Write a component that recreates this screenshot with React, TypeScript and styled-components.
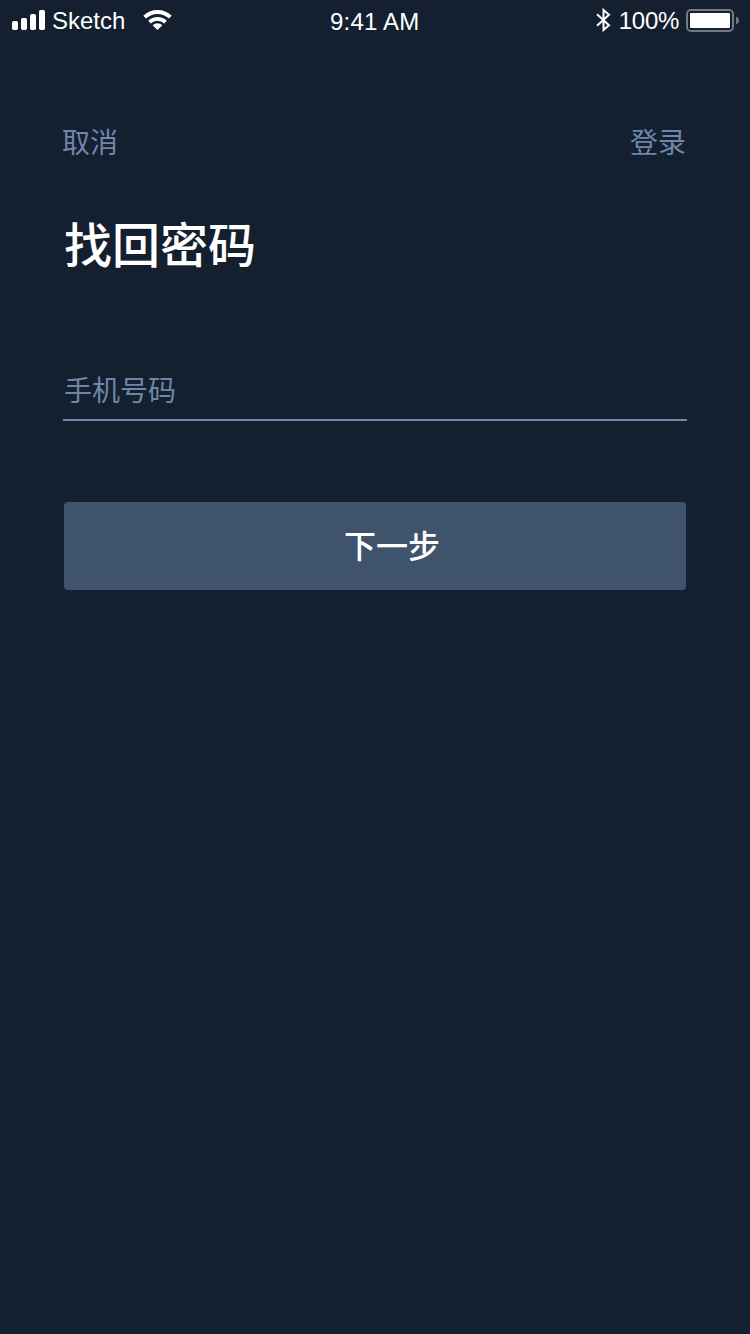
import React from "react";
import styled, { createGlobalStyle } from "styled-components";

const GlobalStyle = createGlobalStyle`
  html, body { margin: 0; background: #141f30; }
  * { box-sizing: border-box; }
`;

const Screen = styled.main`
  width: 750px;
  height: 1334px;
  background: #141f30;
  font-family: "Noto Sans CJK SC", sans-serif;
  overflow: hidden;
`;

const StatusBar = styled.header`
  display: grid;
  grid-template-columns: 1fr auto 1fr;
  height: 40px;
  padding: 0 11px 0 12px;
  color: #fff;
  font: 24px/40px "Liberation Sans", Arial, sans-serif;
`;

const StatusGroup = styled.div<{ $end?: boolean }>`
  display: flex;
  align-items: flex-start;
  justify-content: ${(p) => (p.$end ? "flex-end" : "flex-start")};

  svg { display: block; flex: none; }
`;

const StatusText = styled.span<{ $spacing?: number; $top?: number; $right?: number }>`
  letter-spacing: ${(p) => p.$spacing ?? 0}px;
  padding-top: ${(p) => p.$top ?? 1}px;
  padding-right: ${(p) => p.$right ?? 0}px;
  white-space: nowrap;
`;

const SignalIcon = styled.svg`margin: 10px 7px 0 0;`;
const WifiIcon = styled.svg`margin: 9px 0 0 17.5px;`;
const BluetoothIcon = styled.svg`margin: 8px 8px 0 0;`;
const BatteryIcon = styled.svg`margin: 9px 0 0 7px;`;

const Nav = styled.nav`
  display: flex;
  justify-content: space-between;
  margin-top: 81px;
  padding: 0 64px 0 62px;
`;

const NavLink = styled.button`
  padding: 0;
  border: 0;
  background: none;
  color: #6f85a9;
  font: 400 28px/40px "Noto Sans CJK SC", sans-serif;
`;

const Title = styled.h1`
  margin: 46px 0 0 64px;
  color: #fff;
  font-size: 48px;
  font-weight: 500;
  line-height: 70px;
`;

const Form = styled.form`
  padding: 93px 63px 0;
`;

const PhoneInput = styled.input`
  display: block;
  width: 100%;
  height: 51px;
  padding: 0 1px 11px;
  border: 0;
  border-bottom: 2px solid #6f85a9;
  border-radius: 0;
  outline: 0;
  background: none;
  color: #fff;
  font: 400 28px/38px "Noto Sans CJK SC", sans-serif;

  &::placeholder { color: #6f85a9; opacity: 1; }
`;

const NextButton = styled.button`
  display: block;
  width: 622px;
  height: 88px;
  margin: 81px 1px 0;
  padding: 0 0 4px 34px;
  border: 0;
  border-radius: 4px;
  background: #40536d;
  color: #fff;
  font: 500 32px/84px "Noto Sans CJK SC", sans-serif;
`;

export default function App() {
  return (
    <Screen>
      <GlobalStyle />
      <StatusBar>
        <StatusGroup>
          <SignalIcon width="33" height="20" viewBox="0 0 33 20" fill="#fff">
            <rect x="0" y="11" width="6" height="9" rx="1.7" />
            <rect x="9" y="8" width="6" height="12" rx="1.7" />
            <rect x="18" y="4" width="6" height="16" rx="1.7" />
            <rect x="27" y="0" width="6" height="20" rx="1.7" />
          </SignalIcon>
          <StatusText>Sketch</StatusText>
          <WifiIcon width="29" height="22" viewBox="0 0 30 22" fill="none" stroke="#fff">
            <path d="M1.7 8.1a19 19 0 0 1 26.6 0" strokeWidth="4" />
            <path d="M6.7 13.2a12 12 0 0 1 16.6 0" strokeWidth="3.8" />
            <path d="M15 21.4l-5-5a7.2 7.2 0 0 1 10 0z" fill="#fff" stroke="none" />
          </WifiIcon>
        </StatusGroup>
        <StatusText $spacing={0.2} $top={2} $right={1.5}>9:41 AM</StatusText>
        <StatusGroup $end>
          <BluetoothIcon width="15" height="24" viewBox="0 0 15 24" fill="none" stroke="#fff" strokeWidth="2">
            <path d="M1 6.3l12 11-5.5 4.7V2L13 6.7l-12 11" />
          </BluetoothIcon>
          <StatusText $spacing={-0.3}>100%</StatusText>
          <BatteryIcon width="53" height="23" viewBox="0 0 53 23">
            <rect x="1" y="1" width="46" height="21" rx="4" fill="none" stroke="#737985" strokeWidth="2" />
            <rect x="4" y="4" width="40" height="15" rx="1" fill="#fff" />
            <path d="M50 7.5c4 1.5 4 6.5 0 8z" fill="#737985" />
          </BatteryIcon>
        </StatusGroup>
      </StatusBar>
      <Nav>
        <NavLink type="button">取消</NavLink>
        <NavLink type="button">登录</NavLink>
      </Nav>
      <Title>找回密码</Title>
      <Form>
        <PhoneInput type="tel" placeholder="手机号码" />
        <NextButton type="button">下一步</NextButton>
      </Form>
    </Screen>
  );
}
